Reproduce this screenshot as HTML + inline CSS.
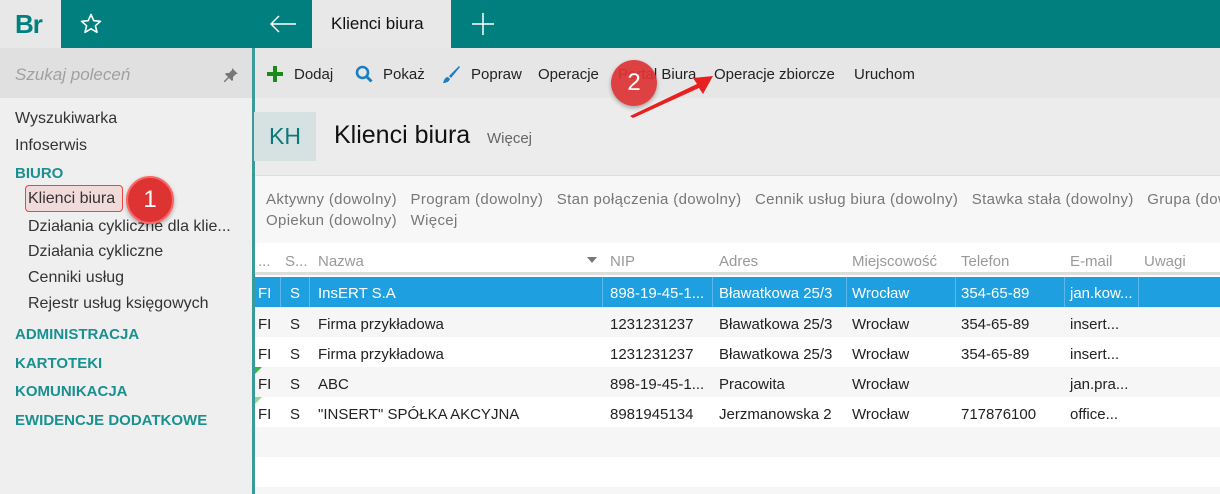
<!DOCTYPE html><html><head><meta charset="utf-8"><style>
*{margin:0;padding:0;box-sizing:border-box}
body{width:1220px;height:494px;overflow:hidden;position:relative;background:#fff;font-family:"Liberation Sans",sans-serif;font-size:15px;color:#222}
.a{position:absolute;white-space:nowrap}
.t{font-size:15px;line-height:30px;transform:translateY(2px)}
.d{transform:translateY(2px)}
</style></head><body>
<div class="a" style="left:0;top:0;width:1220px;height:48px;background:#007f7f"></div>
<div class="a" style="left:0;top:0;width:61px;height:48px;background:#e8e8e8"></div>
<div class="a" style="left:15px;top:9px;font-size:26px;color:#007f7f;font-weight:bold;letter-spacing:-1px">Br</div>
<svg class="a" style="left:79px;top:12px" width="24" height="24" viewBox="0 0 24 24"><path d="M12 2.5l2.8 6.2 6.7.6-5.1 4.4 1.6 6.6L12 16.8 6 20.3l1.6-6.6L2.5 9.3l6.7-.6z" fill="none" stroke="#fff" stroke-width="1.6" stroke-linejoin="round"/></svg>
<svg class="a" style="left:268px;top:14px" width="30" height="20" viewBox="0 0 30 20"><path d="M28 10H3M11 2L3 10l8 8" fill="none" stroke="#fff" stroke-width="1.5"/></svg>
<div class="a" style="left:312px;top:0;width:139px;height:48px;background:#e8e8e8"></div>
<div class="a" style="left:331px;top:14px;font-size:17px;color:#111">Klienci biura</div>
<svg class="a" style="left:472px;top:13px" width="22" height="22"><path d="M11 0v22M0 11h22" stroke="#fff" stroke-width="1.5"/></svg>
<!-- sidebar -->
<div class="a" style="left:0;top:48px;width:252px;height:50px;background:#e0e0e0"></div>
<div class="a" style="left:15px;top:65px;font-size:17px;font-style:italic;color:#a0a0a0">Szukaj poleceń</div>
<svg class="a" style="left:223px;top:67px" width="16" height="16" viewBox="0 0 16 16"><path d="M9 1l6 6-2 0-3 3 0 3-1 1-3-3-4 4-1 0 0-1 4-4-3-3 1-1 3 0 3-3z" fill="#777"/></svg>
<div class="a" style="left:0;top:98px;width:252px;height:396px;background:#efefef"></div>
<div class="a" style="left:252px;top:48px;width:3px;height:446px;background:#3b9a9a"></div>
<div class="a" style="left:15px;top:110px;font-size:16px;color:#333">Wyszukiwarka</div>
<div class="a" style="left:15px;top:137px;font-size:16px;color:#333">Infoserwis</div>
<div class="a" style="left:15px;top:165px;font-size:15px;color:#1a9090;font-weight:bold">BIURO</div>
<div class="a" style="left:25px;top:185px;width:98px;height:27px;border:1.5px solid #e44;border-radius:4px;background:#f1dada"></div>
<div class="a" style="left:28px;top:190px;font-size:16px;color:#333">Klienci biura</div>
<div class="a" style="left:28px;top:218px;font-size:16px;color:#333">Działania cykliczne dla klie...</div>
<div class="a" style="left:28px;top:243px;font-size:16px;color:#333">Działania cykliczne</div>
<div class="a" style="left:28px;top:269px;font-size:16px;color:#333">Cenniki usług</div>
<div class="a" style="left:28px;top:295px;font-size:16px;color:#333">Rejestr usług księgowych</div>
<div class="a" style="left:15px;top:326px;font-size:15px;color:#1a9090;font-weight:bold">ADMINISTRACJA</div>
<div class="a" style="left:15px;top:355px;font-size:15px;color:#1a9090;font-weight:bold">KARTOTEKI</div>
<div class="a" style="left:15px;top:383px;font-size:15px;color:#1a9090;font-weight:bold">KOMUNIKACJA</div>
<div class="a" style="left:15px;top:412px;font-size:15px;color:#1a9090;font-weight:bold">EWIDENCJE DODATKOWE</div>
<div class="a" style="left:126px;top:176px;width:48px;height:48px;border-radius:50%;background:#dd3333;border:2px solid #f66;box-shadow:0 2px 4px rgba(0,0,0,.3);color:#fff;font-size:24px;text-align:center;line-height:44px">1</div>
<!-- toolbar -->
<div class="a" style="left:255px;top:48px;width:965px;height:50px;background:#e6e6e6"></div>
<svg class="a" style="left:266px;top:65px" width="18" height="18"><path d="M9 1v16M1 9h16" stroke="#1a8a1a" stroke-width="4"/></svg>
<div class="a" style="left:294px;top:66px;font-size:15px">Dodaj</div>
<svg class="a" style="left:355px;top:65px" width="18" height="18"><circle cx="7.5" cy="7.5" r="5.5" fill="none" stroke="#1a7fc0" stroke-width="2.6"/><path d="M11.5 11.5l5 5" stroke="#1a7fc0" stroke-width="3"/></svg>
<div class="a" style="left:383px;top:66px;font-size:15px">Pokaż</div>
<svg class="a" style="left:441px;top:64px" width="20" height="20"><path d="M18 2L8 12l2 2L19 3z" fill="#1a7fc0"/><path d="M7 13c-3 0-4 3-5 6 3 0 6-1 7-4z" fill="#1a7fc0"/></svg>
<div class="a" style="left:471px;top:66px;font-size:15px">Popraw</div>
<div class="a" style="left:538px;top:66px;font-size:15px">Operacje</div>
<div class="a" style="left:618px;top:66px;font-size:15px">Portal Biura</div>
<div class="a" style="left:714px;top:66px;font-size:15px">Operacje zbiorcze</div>
<div class="a" style="left:854px;top:66px;font-size:15px">Uruchom</div>
<!-- header -->
<div class="a" style="left:255px;top:98px;width:965px;height:77px;background:#ececec"></div>
<div class="a" style="left:254px;top:112px;width:62px;height:49px;background:#d6e2e2;color:#0e7878;font-size:23px;text-align:center;line-height:49px">KH</div>
<div class="a" style="left:334px;top:121px;font-size:25px;color:#111">Klienci biura</div>
<div class="a" style="left:487px;top:130px;font-size:15px;color:#666">Więcej</div>
<div class="a" style="left:255px;top:175px;width:965px;height:68px;background:#f7f7f7;border-top:1px solid #ddd"></div>
<div class="a" style="left:266px;top:191px;font-size:15px;color:#777;letter-spacing:0.35px">Aktywny (dowolny)&nbsp;&nbsp; Program (dowolny)&nbsp;&nbsp; Stan połączenia (dowolny)&nbsp;&nbsp; Cennik usług biura (dowolny)&nbsp;&nbsp; Stawka stała (dowolny)&nbsp;&nbsp; Grupa (dowolny)</div>
<div class="a" style="left:266px;top:212px;font-size:15px;color:#777;letter-spacing:0.35px">Opiekun (dowolny)&nbsp;&nbsp; Więcej</div>
<!-- table -->
<div class="a" style="left:255px;top:243px;width:965px;height:32px;background:#fff;border-bottom:3px solid #ddd"></div>
<div class="a" style="left:255px;top:277px;width:965px;height:30px;background:#1e9fe0"></div>
<div class="a" style="left:255px;top:307px;width:965px;height:30px;background:#f6f6f6"></div>
<div class="a" style="left:255px;top:367px;width:965px;height:30px;background:#f6f6f6"></div>
<div class="a" style="left:255px;top:427px;width:965px;height:30px;background:#f6f6f6"></div>
<div class="a" style="left:255px;top:487px;width:965px;height:7px;background:#f6f6f6"></div>
<svg class="a" style="left:255px;top:367px" width="8" height="8"><path d="M0 0h7L0 7z" fill="#3bb54a"/></svg>
<svg class="a" style="left:255px;top:397px" width="8" height="8"><path d="M0 0h7L0 7z" fill="#8fd69a"/></svg>
<div class="a" style="left:280px;top:277px;width:1px;height:30px;background:#5bb8ea"></div>
<div class="a" style="left:309px;top:277px;width:1px;height:30px;background:#5bb8ea"></div>
<div class="a" style="left:602px;top:277px;width:1px;height:30px;background:#5bb8ea"></div>
<div class="a" style="left:712px;top:277px;width:1px;height:30px;background:#5bb8ea"></div>
<div class="a" style="left:846px;top:277px;width:1px;height:30px;background:#5bb8ea"></div>
<div class="a" style="left:955px;top:277px;width:1px;height:30px;background:#5bb8ea"></div>
<div class="a" style="left:1064px;top:277px;width:1px;height:30px;background:#5bb8ea"></div>
<div class="a" style="left:1138px;top:277px;width:1px;height:30px;background:#5bb8ea"></div>
<div class="a t" style="left:258px;top:245px;color:#999">...</div>
<div class="a t" style="left:285px;top:245px;color:#999">S...</div>
<div class="a t" style="left:318px;top:245px;color:#999">Nazwa</div>
<svg class="a" style="left:587px;top:257px" width="10" height="6"><path d="M0 0h10L5 6z" fill="#777"/></svg>
<div class="a t" style="left:610px;top:245px;color:#999">NIP</div>
<div class="a t" style="left:719px;top:245px;color:#999">Adres</div>
<div class="a t" style="left:852px;top:245px;color:#999">Miejscowość</div>
<div class="a t" style="left:961px;top:245px;color:#999">Telefon</div>
<div class="a t" style="left:1070px;top:245px;color:#999">E-mail</div>
<div class="a t" style="left:1144px;top:245px;color:#999">Uwagi</div>

<div class="a t" style="left:258px;top:277px;color:#fff">FI</div><div class="a t" style="left:290px;top:277px;color:#fff">S</div><div class="a t" style="left:318px;top:277px;color:#fff">InsERT S.A</div><div class="a t" style="left:610px;top:277px;color:#fff">898-19-45-1...</div><div class="a t" style="left:719px;top:277px;color:#fff">Bławatkowa 25/3</div><div class="a t" style="left:852px;top:277px;color:#fff">Wrocław</div><div class="a t" style="left:961px;top:277px;color:#fff">354-65-89</div><div class="a t" style="left:1070px;top:277px;color:#fff">jan.kow...</div>

<div class="a t" style="left:258px;top:308px">FI</div><div class="a t" style="left:290px;top:308px">S</div><div class="a t" style="left:318px;top:308px">Firma przykładowa</div><div class="a t" style="left:610px;top:308px">1231231237</div><div class="a t" style="left:719px;top:308px">Bławatkowa 25/3</div><div class="a t" style="left:852px;top:308px">Wrocław</div><div class="a t" style="left:961px;top:308px">354-65-89</div><div class="a t" style="left:1070px;top:308px">insert...</div>

<div class="a t" style="left:258px;top:338px">FI</div><div class="a t" style="left:290px;top:338px">S</div><div class="a t" style="left:318px;top:338px">Firma przykładowa</div><div class="a t" style="left:610px;top:338px">1231231237</div><div class="a t" style="left:719px;top:338px">Bławatkowa 25/3</div><div class="a t" style="left:852px;top:338px">Wrocław</div><div class="a t" style="left:961px;top:338px">354-65-89</div><div class="a t" style="left:1070px;top:338px">insert...</div>

<div class="a t" style="left:258px;top:368px">FI</div><div class="a t" style="left:290px;top:368px">S</div><div class="a t" style="left:318px;top:368px">ABC</div><div class="a t" style="left:610px;top:368px">898-19-45-1...</div><div class="a t" style="left:719px;top:368px">Pracowita</div><div class="a t" style="left:852px;top:368px">Wrocław</div><div class="a t" style="left:1070px;top:368px">jan.pra...</div>

<div class="a t" style="left:258px;top:398px">FI</div><div class="a t" style="left:290px;top:398px">S</div><div class="a t" style="left:318px;top:398px">"INSERT" SPÓŁKA AKCYJNA</div><div class="a t" style="left:610px;top:398px">8981945134</div><div class="a t" style="left:719px;top:398px">Jerzmanowska 2</div><div class="a t" style="left:852px;top:398px">Wrocław</div><div class="a t" style="left:961px;top:398px">717876100</div><div class="a t" style="left:1070px;top:398px">office...</div>

<!-- annotation 2 on top -->
<svg class="a" style="left:625px;top:70px" width="90" height="50"><path d="M5 46L72 14 68 8 88 6 78 24 74 18 8 48z" fill="#e82020"/></svg>
<div class="a" style="left:611px;top:60px;width:46px;height:46px;border-radius:50%;background:rgba(221,51,51,.92);box-shadow:0 2px 4px rgba(0,0,0,.3);color:#fff;font-size:24px;text-align:center;line-height:46px">2</div>
</body></html>
